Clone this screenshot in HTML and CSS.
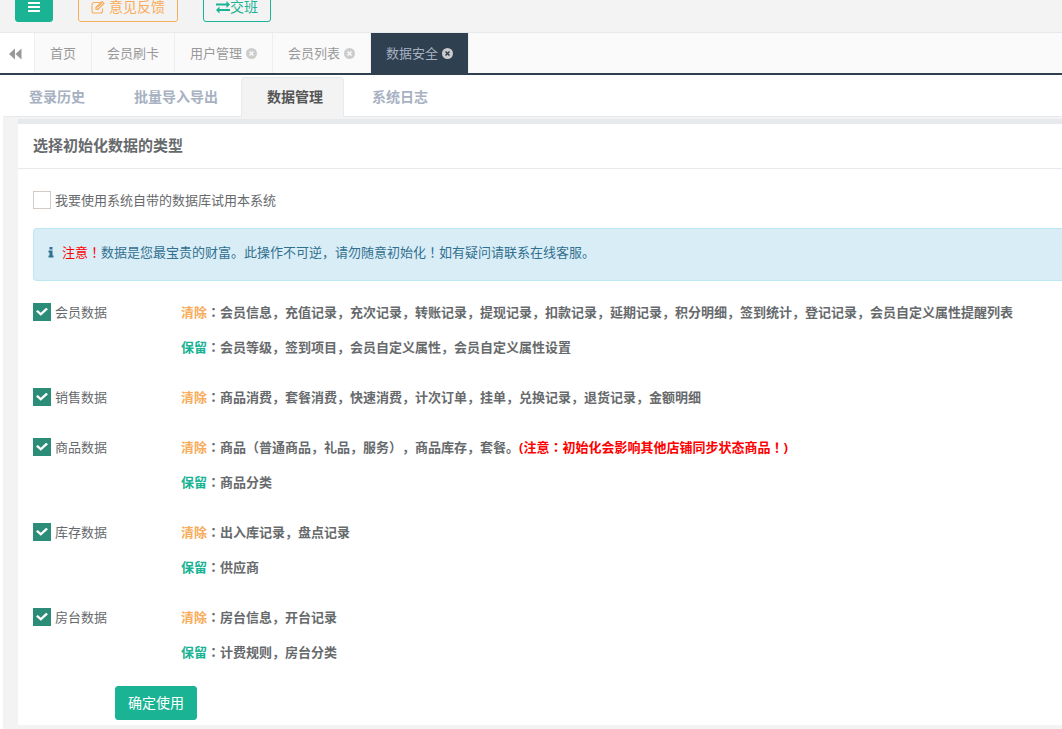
FILE: index.html
```html
<!DOCTYPE html>
<html lang="zh-CN">
<head>
<meta charset="utf-8">
<meta name="viewport" content="width=device-width, initial-scale=1">
<title>数据安全</title>
<link rel="stylesheet" href="styles.css">
</head>
<body>
<svg class="sprite" aria-hidden="true">
  <symbol id="close" viewBox="0 0 11 11"><circle cx="5.5" cy="5.5" r="5.5" fill="currentColor"/><path d="M3.5 3.5l4 4M7.5 3.5L3.5 7.5" stroke-width="1.5"/></symbol>
</svg>
<header class="topbar">
  <button class="btn btn-primary menu" type="button" aria-label="菜单"><svg width="14" height="14" viewBox="0 0 14 14"><path d="M1 3h12M1 7h12M1 11h12" stroke="currentColor" stroke-width="2"/></svg></button>
  <button class="btn btn-warning" type="button"><svg width="14" height="14" viewBox="0 0 14 14" fill="none" stroke="currentColor"><path d="M9 2.5H3A2 2 0 0 0 1 4.500V11a2 2 0 0 0 2 2h6.500a2 2 0 0 0 2-2V8.500" stroke-width="1.100"/><path d="M5 7.500L11 1.500 13 3.500 7 9.500H5z" stroke-width="1.200"/><path d="M6 7.500l1.500 1.500M7 7l4-4" stroke-width="1"/></svg><span class="spaced">意见反馈</span></button>
  <button class="btn btn-outline" type="button"><svg width="14" height="14" viewBox="0 0 14 14" fill="currentColor"><path d="M0 10L3.500 6.500v2.500H14v2H3.500V13.500zM14 4.500L10.500 1v2.500H0v2h10.500V8z"/></svg><span>交班</span></button>
</header>
<nav class="tabs" aria-label="页面">
  <button class="collapse" type="button" aria-label="向左"><svg width="13" height="12" viewBox="0 0 13 12"><path d="M0 6L6 .500V11.500zM6.500 6L12.500 .500V11.500z" fill="currentColor"/></svg></button>
  <a class="tab" href="#">首页</a>
  <a class="tab" href="#">会员刷卡</a>
  <a class="tab" href="#">用户管理<svg class="x"><use href="#close"/></svg></a>
  <a class="tab" href="#">会员列表<svg class="x"><use href="#close"/></svg></a>
  <a class="tab active" href="#">数据安全<svg class="x"><use href="#close"/></svg></a>
</nav>
<div class="page">
  <nav class="subtabs" aria-label="设置">
    <a class="subtab" href="#">登录历史</a>
    <a class="subtab" href="#">批量导入导出</a>
    <a class="subtab active" href="#">数据管理</a>
    <a class="subtab" href="#">系统日志</a>
  </nav>
  <main class="panel">
    <h1 class="title">选择初始化数据的类型</h1>
    <form class="form">
      <label class="check"><input type="checkbox"><span>我要使用系统自带的数据库试用本系统</span></label>
      <div class="alert"><svg width="6" height="12" viewBox="0 0 6 12" fill="currentColor"><path d="M1.500 1h3v2.500h-3zM.500 4.500h4V9.500h1V11.500h-5V9.500h1V6.500h-1z"/></svg><p><span class="red">注意<span class="mid">！</span></span>数据是您最宝贵的财富。此操作不可逆，请勿随意初始化<span class="mid">！</span>如有疑问请联系在线客服。</p></div>
      <div class="rows">
        <div class="row"><label class="check"><input type="checkbox" checked><span>会员数据</span></label>
          <div class="desc"><p><span class="clear">清除</span><span class="mid">：</span>会员信息，充值记录，充次记录，转账记录，提现记录，扣款记录，延期记录，积分明细，签到统计，登记记录，会员自定义属性提醒列表</p><p><span class="keep">保留</span><span class="mid">：</span>会员等级，签到项目，会员自定义属性，会员自定义属性设置</p></div></div>
        <div class="row"><label class="check"><input type="checkbox" checked><span>销售数据</span></label>
          <div class="desc"><p><span class="clear">清除</span><span class="mid">：</span>商品消费，套餐消费，快速消费，计次订单，挂单，兑换记录，退货记录，金额明细</p></div></div>
        <div class="row"><label class="check"><input type="checkbox" checked><span>商品数据</span></label>
          <div class="desc"><p><span class="clear">清除</span><span class="mid">：</span>商品（普通商品，礼品，服务），商品库存，套餐。<span class="red">(注意<span class="mid">：</span>初始化会影响其他店铺同步状态商品<span class="mid">！</span>)</span></p><p><span class="keep">保留</span><span class="mid">：</span>商品分类</p></div></div>
        <div class="row"><label class="check"><input type="checkbox" checked><span>库存数据</span></label>
          <div class="desc"><p><span class="clear">清除</span><span class="mid">：</span>出入库记录，盘点记录</p><p><span class="keep">保留</span><span class="mid">：</span>供应商</p></div></div>
        <div class="row"><label class="check"><input type="checkbox" checked><span>房台数据</span></label>
          <div class="desc"><p><span class="clear">清除</span><span class="mid">：</span>房台信息，开台记录</p><p><span class="keep">保留</span><span class="mid">：</span>计费规则，房台分类</p></div></div>
      </div>
      <button class="btn btn-primary submit" type="button">确定使用</button>
    </form>
  </main>
</div>
</body>
</html>
```
FILE: styles.css
```css
* { box-sizing: border-box; }
body {
  margin: 0;
  background: #fff;
  color: #676a6c;
  font: 13px/20px "Open Sans", "Noto Sans CJK SC", sans-serif;
  text-spacing-trim: space-all;
}
p, h1 { margin: 0; }
a { color: inherit; text-decoration: none; }
svg { flex: none; }
.sprite { display: none; }

.btn {
  display: flex;
  align-items: center;
  height: 30px;
  padding: 0 12px;
  border: 1px solid;
  border-radius: 3px;
  background: transparent;
  font: inherit;
  font-size: 14px;
  white-space: nowrap;
}
.btn-primary { background: #1ab394; border-color: #1ab394; color: #fff; }
.btn-warning { color: #f8ac59; }
.btn-outline { color: #1ab394; }
.menu { padding: 0 11px; }
.spaced { margin-left: 4px; }

.topbar {
  display: flex;
  align-items: flex-end;
  gap: 25px;
  height: 33px;
  padding: 0 15px 10px;
  overflow: hidden;
  background: #f3f3f3;
  border-bottom: 1px solid #e7eaec;
}
.topbar .btn { line-height: 14px; }

.tabs {
  display: flex;
  height: 42px;
  background: #fafafa;
  border-bottom: 2px solid #2f4050;
}
.collapse {
  display: flex;
  align-items: center;
  justify-content: center;
  width: 35px;
  padding: 2px 3px 0 0;
  border: 0;
  border-right: 1px solid #eee;
  background: #fff;
  color: #999;
}
.tab {
  display: flex;
  align-items: center;
  gap: 4px;
  padding: 0 15px;
  border-right: 1px solid #eee;
  color: #999;
  white-space: nowrap;
}
.tab.active { background: #2f4050; color: #a7b1c2; }
.x { width: 11px; height: 11px; color: #ccc; stroke: #fafafa; }
.x use { stroke-width: 0; }
.active .x { stroke: #2f4050; }

.page { min-height: calc(100vh - 75px); margin-left: 3px; background: #f3f3f3; }
.subtabs {
  display: flex;
  gap: 2px;
  height: 42px;
  padding-top: 2px;
  background: #fff;
  box-shadow: inset 0 -1px #e7eaec;
}
.subtab {
  padding: 9px 20px 0 25px;
  border: 1px solid transparent;
  border-bottom: 0;
  border-radius: 4px 4px 0 0;
  color: #a7b1c2;
  font-size: 14px;
  font-weight: 700;
  white-space: nowrap;
}
.subtab.active { background: #f3f3f3; border-color: #e7eaec; color: #555; }

.panel {
  margin: 2px 0 0 15px;
  border-top: 5px solid #e7eaec;
  background: #fff;
}
.title {
  padding: 11px 15px 13px;
  border-bottom: 1px solid #e7eaec;
  font-size: 15px;
  line-height: 20px;
}
.form { padding: 13px 0 5px 15px; }
.check { display: flex; align-items: center; gap: 4px; height: 35px; white-space: nowrap; }
.check input {
  appearance: none;
  width: 18px;
  height: 18px;
  margin: 0;
  border: 1px solid #d2cac4;
  background: #fff;
}
.check input:checked {
  display: grid;
  place-items: center;
  border-color: #2b8c78;
  background: #2b8c78;
}
.check input:checked::before {
  content: "";
  width: 12px;
  height: 10px;
  background: #fff;
  clip-path: polygon(0 50%, 15% 36%, 40% 62%, 84% 12%, 100% 27%, 40% 93%);
}
.alert {
  display: flex;
  align-items: center;
  gap: 8px;
  margin: 11px 0 13px;
  padding: 13px 14px 18px;
  border: 1px solid #bce8f1;
  border-right: 0;
  border-radius: 4px 0 0 4px;
  background: #d9edf7;
  color: #31708f;
}
/* Centred form of the full-width colon and exclamation mark */
.mid { font-family: "Noto Sans CJK JP", sans-serif; font-feature-settings: "locl" 0; }
.red { color: #f00; }
.rows { display: grid; gap: 15px; }
.row { display: grid; grid-template-columns: 148px 1fr; }
.desc { font-weight: 700; line-height: 35px; }
.desc p { height: 35px; }
.clear { color: #f8ac59; }
.keep { color: #1ab394; }
.submit { height: 34px; margin: 17px 0 0 82px; }
```
